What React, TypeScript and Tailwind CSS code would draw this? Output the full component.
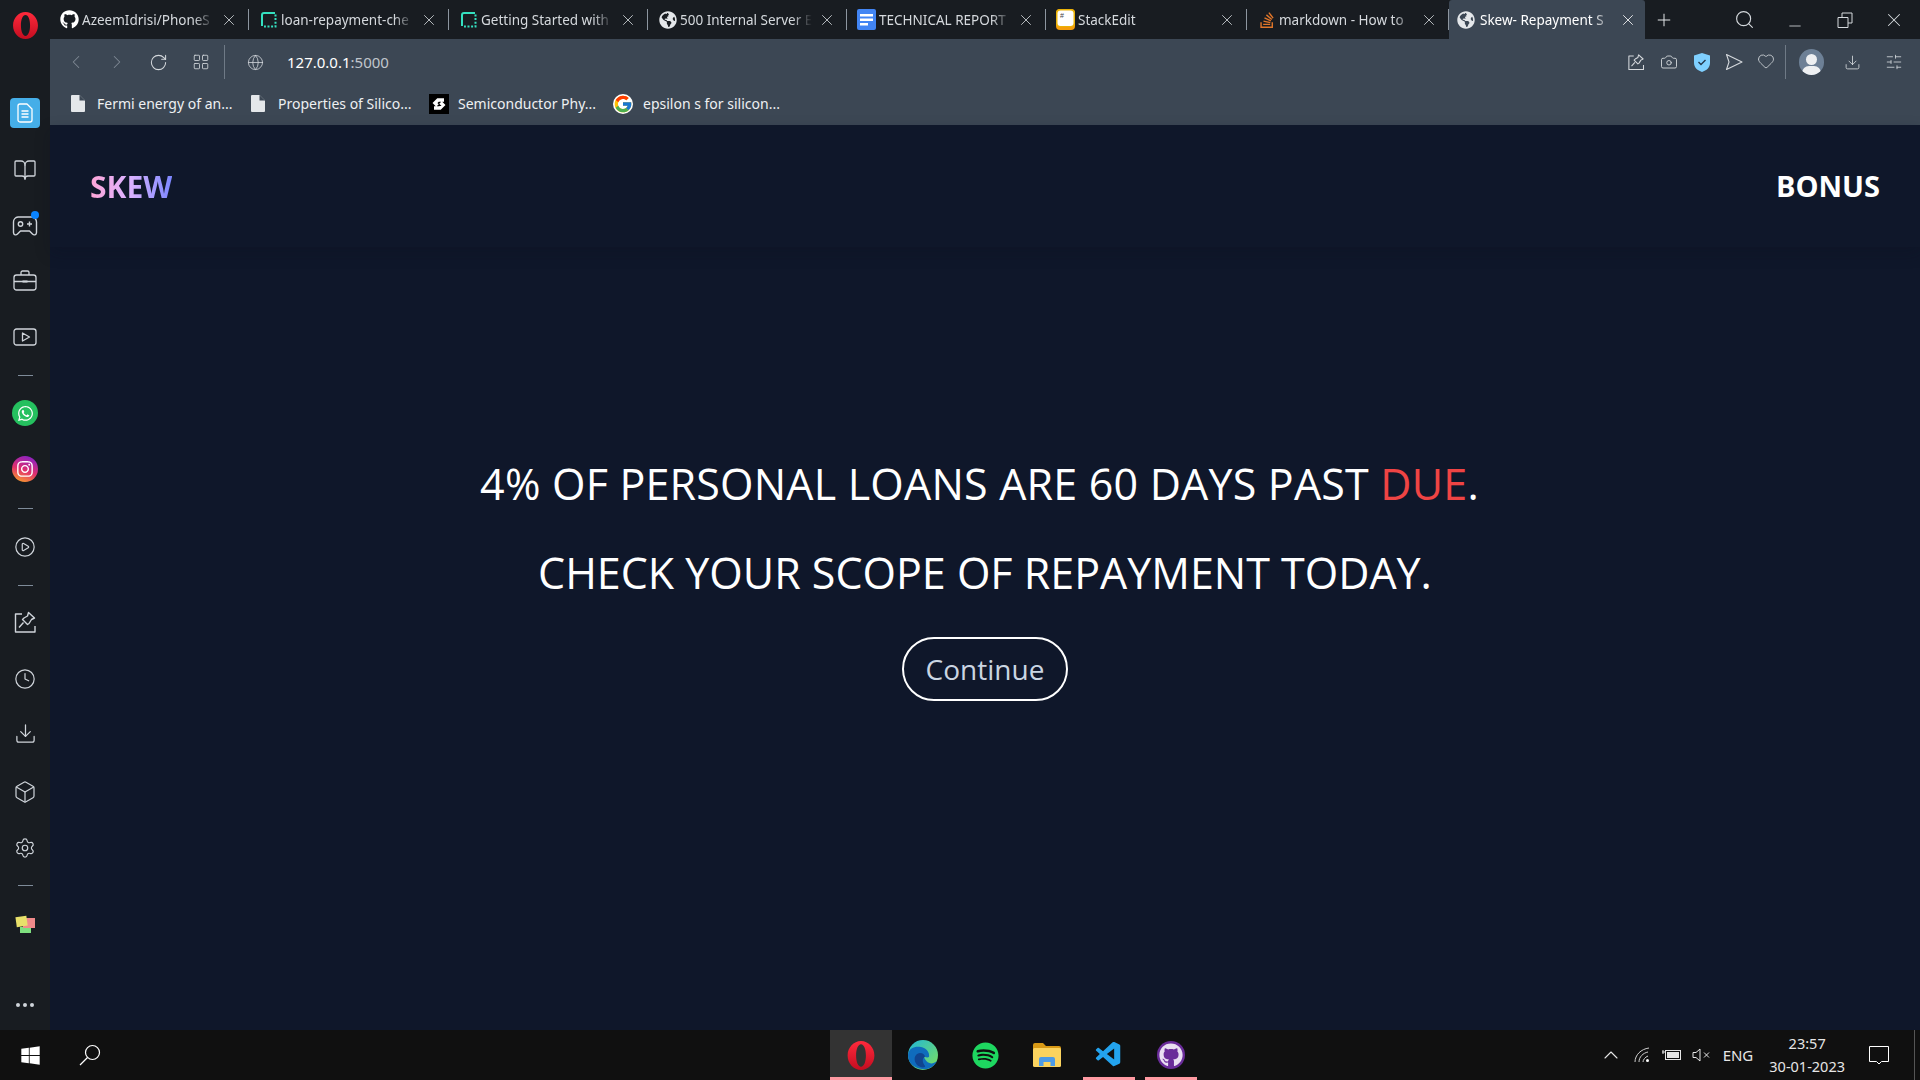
import { ReactNode } from "react";
import { X, Plus, Search, ChevronLeft, ChevronRight, RotateCw, LayoutGrid, Globe, Camera, Heart, Download, SlidersHorizontal, BookOpen, CirclePlay, Clock, Box, Settings, Minus, ChevronUp } from "lucide-react";
import { FaGithub, FaWhatsapp, FaInstagram, FaSpotify, FaStackOverflow, FaGlobeAmericas, FaWindows } from "react-icons/fa";
import { FcGoogle } from "react-icons/fc";
import { VscVscode } from "react-icons/vsc";

const UI = "font-['Noto_Sans','Open_Sans',sans-serif]";

function OperaLogo({ w, h }: { w: number; h: number }) {
  return (
    <svg width={w} height={h} viewBox="0 0 24 26">
      <defs>
        <linearGradient id="operaRed" x1="0" y1="0" x2="0" y2="1">
          <stop offset="0" stopColor="#ff2a3c" />
          <stop offset="1" stopColor="#c40d20" />
        </linearGradient>
      </defs>
      <path fillRule="evenodd" d="M12 0c6.600 0 12 5.800 12 13s-5.400 13-12 13S0 20.200 0 13 5.400 0 12 0zm0 3C9.300 3 7.600 7.500 7.600 13s1.700 10 4.400 10 4.400-4.500 4.400-10S14.700 3 12 3z" fill="url(#operaRed)" />
    </svg>
  );
}

function DashedSquare() {
  return (
    <svg width="17" height="17" viewBox="0 0 17 17" fill="none" stroke="#34e0c0" strokeWidth="2">
      <path d="M2 15V4a2 2 0 0 1 2-2h11" />
      <path d="M15.500 3.500v12H4" strokeDasharray="2 1.600" />
    </svg>
  );
}

function DocsIcon() {
  return (
    <svg width="19" height="21" viewBox="0 0 19 21">
      <rect width="19" height="21" rx="2" fill="#4285f4" />
      <path d="M3 5h13v2.400H3zM3 9.500h13v2.400H3zM3 14h8v2.400H3z" fill="#fff" />
    </svg>
  );
}

function StackEditIcon() {
  return (
    <svg width="19" height="21" viewBox="0 0 19 21">
      <rect width="19" height="21" rx="4" fill="#f59e0b" />
      <rect width="19" height="18" rx="4" fill="#eab308" />
      <rect x="1.500" y="1.500" width="16" height="15.500" rx="3" fill="#fff" />
      <text x="4" y="9" fontSize="7" fill="#444" fontFamily="Liberation Sans">#</text>
    </svg>
  );
}

const tabs: { title: string; icon: ReactNode; w: string }[] = [
  { title: "AzeemIdrisi/PhoneS", icon: <FaGithub size={19} className="text-white" />, w: "w-[199px]" },
  { title: "loan-repayment-che", icon: <DashedSquare />, w: "w-[200px]" },
  { title: "Getting Started with", icon: <DashedSquare />, w: "w-[199px]" },
  { title: "500 Internal Server E", icon: <FaGlobeAmericas size={18} className="text-[#e4e7ea]" />, w: "w-[199px]" },
  { title: "TECHNICAL REPORT", icon: <DocsIcon />, w: "w-[199px]" },
  { title: "StackEdit", icon: <StackEditIcon />, w: "w-[201px]" },
  { title: "markdown - How to", icon: <FaStackOverflow size={18} className="text-[#e0762a]" />, w: "w-[202px]" },
];

function Tab({ title, icon, w }: { title: string; icon: ReactNode; w: string }) {
  return (
    <div className={`${w} flex h-[39px] items-center border-r border-[#8d96a0] [border-image:linear-gradient(transparent_25%,#8d96a0_25%,#8d96a0_75%,transparent_75%)_1] pl-[10px] pr-[10px]`}>
      <span className="flex w-[19px] shrink-0 justify-center">{icon}</span>
      <span className="ml-[3px] min-w-0 flex-1 overflow-hidden whitespace-nowrap pt-[1px] text-[13.500px] text-[#d5d9dd] [mask-image:linear-gradient(90deg,#000_85%,transparent)]">{title}</span>
      <X size={18} strokeWidth={1.100} className="ml-[6px] shrink-0 text-[#d5d9dd]" />
    </div>
  );
}

function PinIcon({ size = 24, className = "" }: { size?: number; className?: string }) {
  return (
    <svg width={size} height={size} viewBox="0 0 24 24" fill="none" stroke="currentColor" strokeWidth="1.400" strokeLinejoin="round" className={className}>
      <path d="M9 4H2.500v18H22v-6" />
      <path d="M15.500 2.500l6 5.500-3 1.500-2.500 4-1.500 1-5-5 1.500-1.500 3.500-2zM10.500 12.500L6 17.500" />
    </svg>
  );
}

function GameIcon() {
  return (
    <svg width="26" height="22" viewBox="0 0 26 22" fill="none" stroke="#cfd4da" strokeWidth="1.400" strokeLinejoin="round">
      <path d="M6 2h13.500a5 5 0 0 1 5 5v10.500c0 2.600-2.600 3-4 1.600L17.500 16h-9l-3 3.100c-1.400 1.400-4 1-4-1.600V7a5 5 0 0 1 4.500-5z" />
      <circle cx="8.500" cy="9" r="2.200" />
      <path d="M15 9h5M17.500 6.500v5" />
    </svg>
  );
}

function BagIcon() {
  return (
    <svg width="24" height="21" viewBox="0 0 24 21" fill="none" stroke="#cfd4da" strokeWidth="1.300" strokeLinejoin="round" className="-mt-[2px]">
      <rect x="1" y="5" width="22" height="15" rx="2.500" />
      <path d="M8 5V2.500A1.500 1.500 0 0 1 9.500 1h5A1.500 1.500 0 0 1 16 2.500V5M1 11.500h22" />
      <rect x="9.500" y="10.500" width="5" height="2" fill="#cfd4da" stroke="none" />
    </svg>
  );
}

function VideoIcon() {
  return (
    <svg width="24" height="18" viewBox="0 0 24 18" fill="none" stroke="#cfd4da" strokeWidth="1.300" strokeLinejoin="round">
      <rect x="1" y="1" width="22" height="16" rx="2.500" />
      <path d="M9.500 5v8l7-4z" />
    </svg>
  );
}

function Stickies() {
  return (
    <svg width="20" height="18" viewBox="0 0 20 18" className="mt-[3px]">
      <rect x="5" y="12" width="11" height="6" fill="#7fe07f" />
      <rect x="8" y="3" width="12" height="10" fill="#f08a8a" />
      <rect x="1" y="1.500" width="11" height="10" fill="#e8e06a" transform="rotate(-8 6 6)" />
    </svg>
  );
}

function SideLine({ h }: { h: string }) {
  return (
    <div className={`flex ${h} items-center justify-center`}>
      <div className="h-px w-[15px] bg-[#7e8b99]" />
    </div>
  );
}

function SideItem({ children, mt = "" }: { children: ReactNode; mt?: string }) {
  return <div className={`flex h-14 w-full items-center justify-center text-[#cfd4da] ${mt}`}>{children}</div>;
}

function Sidebar() {
  return (
    <aside className="flex w-[50px] shrink-0 flex-col bg-[#181c21]">
      <div className="flex h-[50px] items-center justify-center">
        <OperaLogo w={25} h={27} />
      </div>
      <div className="mt-[35px]">
        <SideItem>
          <div className="flex h-[30px] w-[30px] items-center justify-center rounded-[4px] bg-[#45aee8]">
            <svg width="16" height="20" viewBox="0 0 16 20" fill="none" stroke="#fff" strokeWidth="1.300" strokeLinejoin="round">
              <path d="M3 1h7l5 5v11a2 2 0 0 1-2 2H3a2 2 0 0 1-2-2V3a2 2 0 0 1 2-2z" />
              <path d="M4.500 8h7M4.500 11h7M4.500 14h7" />
            </svg>
          </div>
        </SideItem>
        <SideItem><BookOpen size={24} strokeWidth={1.300} className="mt-[1px]" /></SideItem>
        <SideItem>
          <div className="relative mt-[1px]">
            <GameIcon />
            <span className="absolute -right-[1px] -top-[4px] h-2 w-2 rounded-full bg-[#0a84ff]" />
          </div>
        </SideItem>
        <SideItem><BagIcon /></SideItem>
        <SideItem><VideoIcon /></SideItem>
        <SideLine h="h-5" />
        <SideItem>
          <div className="flex h-[26px] w-[26px] items-center justify-center rounded-full bg-[#25c05f]">
            <FaWhatsapp size={17} className="text-white" />
          </div>
        </SideItem>
        <SideItem>
          <div className="flex h-[26px] w-[26px] items-center justify-center rounded-full bg-[linear-gradient(200deg,#7a1fd6,#e1306c_55%,#fdb022)]">
            <FaInstagram size={18} className="text-white" />
          </div>
        </SideItem>
        <SideLine h="h-[22px]" />
        <SideItem><CirclePlay size={22} strokeWidth={1.300} /></SideItem>
        <SideLine h="h-5" />
        <SideItem><PinIcon size={24} className="-mt-[2px]" /></SideItem>
        <SideItem><Clock size={22} strokeWidth={1.300} /></SideItem>
        <SideItem><Download size={23} strokeWidth={1.300} className="-mt-[4px]" /></SideItem>
        <SideItem mt="mt-[1px]"><Box size={24} strokeWidth={1.200} /></SideItem>
        <SideItem><Settings size={22} strokeWidth={1.300} /></SideItem>
        <SideLine h="h-[18px]" />
        <SideItem><Stickies /></SideItem>
      </div>
      <div className="mt-auto flex h-[50px] items-center justify-center gap-[3px]">
        <span className="h-1 w-1 rounded-full bg-[#cfd4da]" />
        <span className="h-1 w-1 rounded-full bg-[#cfd4da]" />
        <span className="h-1 w-1 rounded-full bg-[#cfd4da]" />
      </div>
    </aside>
  );
}

function TabStrip() {
  return (
    <div className="flex h-[39px] shrink-0 items-center bg-[#181c21]">
      {tabs.map((t) => (
        <Tab key={t.title} title={t.title} icon={t.icon} w={t.w} />
      ))}
      <div className="flex h-[39px] w-[196px] items-center rounded-t-[3px] bg-[#3c4754] px-[8px]">
        <FaGlobeAmericas size={18} className="shrink-0 text-[#e4e7ea]" />
        <span className="ml-[5px] min-w-0 flex-1 overflow-hidden whitespace-nowrap pt-[1px] text-[13.500px] text-white [mask-image:linear-gradient(90deg,#000_85%,transparent)]">Skew- Repayment S</span>
        <X size={18} strokeWidth={1.100} className="ml-[6px] shrink-0 text-white" />
      </div>
      <Plus size={20} strokeWidth={1.200} className="ml-[9px] text-[#e4e7ea]" />
      <div className="ml-auto flex items-center text-[#d5d9dd]">
        <Search size={21} strokeWidth={1.300} className="mr-[31px]" />
        <Minus size={18} strokeWidth={1.100} className="mr-[33px] mt-[12px]" />
        <svg width="16" height="16" viewBox="0 0 16 16" fill="none" stroke="currentColor" className="mr-[30px]">
          <path d="M1 5.500h10v10H1zM5 5.500V1h10v10h-4" />
        </svg>
        <X size={22} strokeWidth={1.100} className="mr-[15px]" />
      </div>
    </div>
  );
}

function Toolbar() {
  return (
    <div className="flex h-[46px] shrink-0 items-center bg-[#3c4754] pl-[15px] pr-[17px] text-[#d5d9dd]">
      <ChevronLeft size={22} strokeWidth={1.100} className="text-[#7f8994]" />
      <ChevronRight size={22} strokeWidth={1.100} className="ml-[19px] text-[#7f8994]" />
      <RotateCw size={19} strokeWidth={1.300} className="ml-[21px]" />
      <LayoutGrid size={18} strokeWidth={1.100} className="ml-[24px]" />
      <div className="ml-[14px] h-[34px] w-px bg-[#6f7a86]" />
      <Globe size={17} strokeWidth={1.100} className="ml-[22px]" />
      <span className="ml-[23px] text-[15px] text-white">127.0.0.1<span className="text-[#c0c6cc]">:5000</span></span>
      <div className="ml-auto flex items-center">
        <PinIcon size={18} />
        <Camera size={18} strokeWidth={1.200} className="ml-[15px]" />
        <svg width="16" height="19" viewBox="0 0 16 19" className="ml-[16px]">
          <path d="M8 0l8 2.500V10c0 4.500-3.500 7.500-8 9-4.500-1.500-8-4.500-8-9V2.500z" fill="#7fd0ff" />
          <path d="M4.500 9l2.500 2.500L11.500 7" fill="none" stroke="#23364a" strokeWidth="1.400" />
        </svg>
        <svg width="18" height="18" viewBox="0 0 18 18" fill="none" stroke="currentColor" strokeWidth="1.100" strokeLinejoin="round" className="ml-[15px]">
          <path d="M1.500 1.500L17 9 1.500 16.500 4 9z" />
        </svg>
        <Heart size={18} strokeWidth={1.100} className="ml-[14px] -mt-[2px]" />
        <div className="ml-[10px] h-[34px] w-px bg-[#6f7a86]" />
        <div className="relative ml-[13px] h-[26px] w-[25px] overflow-hidden rounded-full bg-[#6d8096]">
          <span className="absolute left-[7px] top-[5px] h-[11px] w-[11px] rounded-full bg-[#eef0f2]" />
          <span className="absolute left-[3px] top-[17px] h-[14px] w-[19px] rounded-full bg-[#eef0f2]" />
        </div>
        <Download size={17} strokeWidth={1.200} className="ml-[20px]" />
        <SlidersHorizontal size={18} strokeWidth={1.100} className="ml-[24px]" />
      </div>
    </div>
  );
}

function FileIcon() {
  return (
    <svg width="14" height="17" viewBox="0 0 14 17">
      <path d="M1 0h7.500L14 5.500V16a1 1 0 0 1-1 1H1a1 1 0 0 1-1-1V1a1 1 0 0 1 1-1z" fill="#e4e7ea" />
      <path d="M8.500 0v5.500H14" fill="#3c4754" />
    </svg>
  );
}

function Bookmarks() {
  return (
    <div className="flex h-[40px] shrink-0 items-center bg-[#3c4754] pb-[3px] pl-[21px] text-[14px] text-[#eef0f2]">
      <FileIcon />
      <span className="ml-[12px] w-[154px] whitespace-nowrap">Fermi energy of an...</span>
      <FileIcon />
      <span className="ml-[13px] w-[151px] whitespace-nowrap">Properties of Silico...</span>
      <span className="flex h-[20px] w-[20px] items-center justify-center bg-black">
        <svg width="16" height="16" viewBox="0 0 16 16" fill="none" stroke="#fff" strokeWidth="3.500">
          <path d="M13 4H7L4 7l2.500 2.500M3 12h6l3-3-2.500-2.500" />
        </svg>
      </span>
      <span className="ml-[9px] w-[155px] whitespace-nowrap">Semiconductor Phy...</span>
      <FcGoogle size={20} className="rounded-full bg-white" />
      <span className="ml-[10px] whitespace-nowrap">epsilon s for silicon...</span>
    </div>
  );
}

function Page() {
  return (
    <main className="flex min-h-0 flex-1 flex-col bg-[#0f172a] font-['Open_Sans',sans-serif]">
      <nav className="flex h-[122px] shrink-0 items-center justify-between pl-[40px] pr-[40px] shadow-[0_6px_14px_rgba(10,15,30,0.25)]">
        <span className="bg-gradient-to-r from-pink-300 via-purple-300 to-indigo-400 bg-clip-text text-[30px] font-bold text-transparent">SKEW</span>
        <span className="text-[29px] font-bold text-white">BONUS</span>
      </nav>
      <section className="flex flex-col items-center pt-[207px]">
        <h1 className="pr-[11px] text-[43px] font-normal leading-[60px] tracking-[0.2px] text-white">
          4% OF PERSONAL LOANS ARE 60 DAYS PAST <span className="text-[#ef4444]">DUE</span>.
        </h1>
        <h2 className="mt-[29px] text-[43px] font-normal leading-[60px] text-white">CHECK YOUR SCOPE OF REPAYMENT TODAY.</h2>
        <button className="mt-[34px] flex h-[64px] w-[166px] items-center justify-center rounded-full border-2 border-white text-[28px] text-slate-300">Continue</button>
      </section>
    </main>
  );
}

function EdgeIcon() {
  return (
    <svg width="30" height="30" viewBox="0 0 30 30">
      <defs>
        <linearGradient id="edgeA" x1="0" y1="0" x2="1" y2="1">
          <stop offset="0" stopColor="#1fb7d8" />
          <stop offset="1" stopColor="#7fe05a" />
        </linearGradient>
      </defs>
      <circle cx="15" cy="15" r="15" fill="url(#edgeA)" />
      <path d="M0 15C1 7 8 6 13 7c5 1 9 5 8 10-2 1-5 0-6-2 3 8 8 11 14 6-3 6-9 9-15 8C6 28 0 23 0 15z" fill="#0f6cbd" />
      <path d="M9 25c-4-5-3-11 3-12 3 0 5 2 5 4-3 1-3 5 0 9 1 2-5 2-8-1z" fill="#10448f" />
    </svg>
  );
}

function FolderIcon() {
  return (
    <svg width="28" height="24" viewBox="0 0 28 24">
      <path d="M0 2a2 2 0 0 1 2-2h8l3 3h13a2 2 0 0 1 2 2v2H0z" fill="#d99a16" />
      <rect y="5" width="28" height="19" rx="1.500" fill="#fbd35f" />
      <path d="M6 23v-7a2 2 0 0 1 2-2h12a2 2 0 0 1 2 2v7h-4.500v-4h-7v4z" fill="#4d9be6" />
    </svg>
  );
}

function Slot({ children, open, active }: { children: ReactNode; open?: boolean; active?: boolean }) {
  return (
    <div className={`relative flex h-[50px] w-[62px] items-center justify-center ${active ? "bg-[#333333]" : ""}`}>
      {children}
      {open && <span className={`absolute bottom-0 h-[3px] bg-[#ff9aa2] ${active ? "inset-x-0" : "inset-x-[5px]"}`} />}
    </div>
  );
}

function Taskbar() {
  return (
    <footer className="flex h-[50px] shrink-0 items-center bg-[#101010] text-[#e6e6e6]">
      <div className="flex w-[60px] justify-center">
        <FaWindows size={21} className="text-white" />
      </div>
      <svg width="22" height="22" viewBox="0 0 22 22" fill="none" stroke="#fff" strokeWidth="1.200" className="ml-[19px]">
        <circle cx="13.500" cy="8.500" r="7" />
        <path d="M8.500 13.500L1 21" />
      </svg>
      <div className="ml-[729px] flex">
        <Slot open active><OperaLogo w={28} h={29} /></Slot>
        <Slot><EdgeIcon /></Slot>
        <Slot><FaSpotify size={27} className="text-[#1ed760]" /></Slot>
        <Slot><FolderIcon /></Slot>
        <Slot open><VscVscode size={30} className="text-[#23a3ee]" /></Slot>
        <Slot open>
          <span className="flex h-7 w-7 items-center justify-center rounded-full bg-[#6a2c9a]">
            <FaGithub size={24} className="text-[#e9dff2]" />
          </span>
        </Slot>
      </div>
      <div className="ml-auto flex h-full items-center">
        <ChevronUp size={24} strokeWidth={1.100} />
        <svg width="16" height="16" viewBox="0 0 16 16" fill="none" stroke="#cfcfcf" className="ml-[11px]">
          <path d="M1 15C1 8 7 2 15 1M5 15c0-5 4-9 9-10M9 15c0-2 2-5 5-6" />
          <circle cx="13.500" cy="13.500" r="1.500" fill="#fff" stroke="none" />
        </svg>
        <svg width="20" height="12" viewBox="0 0 20 12" fill="none" stroke="#e6e6e6" className="ml-[12px]">
          <rect x="3.500" y="1.500" width="15" height="9" />
          <rect x="5" y="3" width="12" height="6" fill="#e6e6e6" stroke="none" />
          <path d="M0 3h4M1 1v4" />
        </svg>
        <svg width="19" height="14" viewBox="0 0 19 14" fill="none" stroke="#e6e6e6" className="ml-[10px]">
          <path d="M1 4.500h3L8 1v12L4 9.500H1zM12 4.500l5 5M17 4.500l-5 5" />
        </svg>
        <span className="ml-[12px] text-[15px]">ENG</span>
        <div className="ml-[16px] flex flex-col items-center text-[14.500px] leading-[23px]">
          <span>23:57</span>
          <span>30-01-2023</span>
        </div>
        <svg width="20" height="19" viewBox="0 0 20 19" fill="none" stroke="#fff" className="ml-[24px]">
          <path d="M.5.5h19v15h-7l-2.500 2.500L7.500 15.500h-7z" />
        </svg>
        <div className="ml-[25px] h-full w-px bg-[#555555]" />
        <div className="w-[5px]" />
      </div>
    </footer>
  );
}

export default function App() {
  return (
    <div className={`flex h-screen w-screen flex-col overflow-hidden bg-[#0f172a] ${UI}`}>
      <div className="flex min-h-0 flex-1">
        <Sidebar />
        <div className="flex min-w-0 flex-1 flex-col">
          <TabStrip />
          <Toolbar />
          <Bookmarks />
          <Page />
        </div>
      </div>
      <Taskbar />
    </div>
  );
}
